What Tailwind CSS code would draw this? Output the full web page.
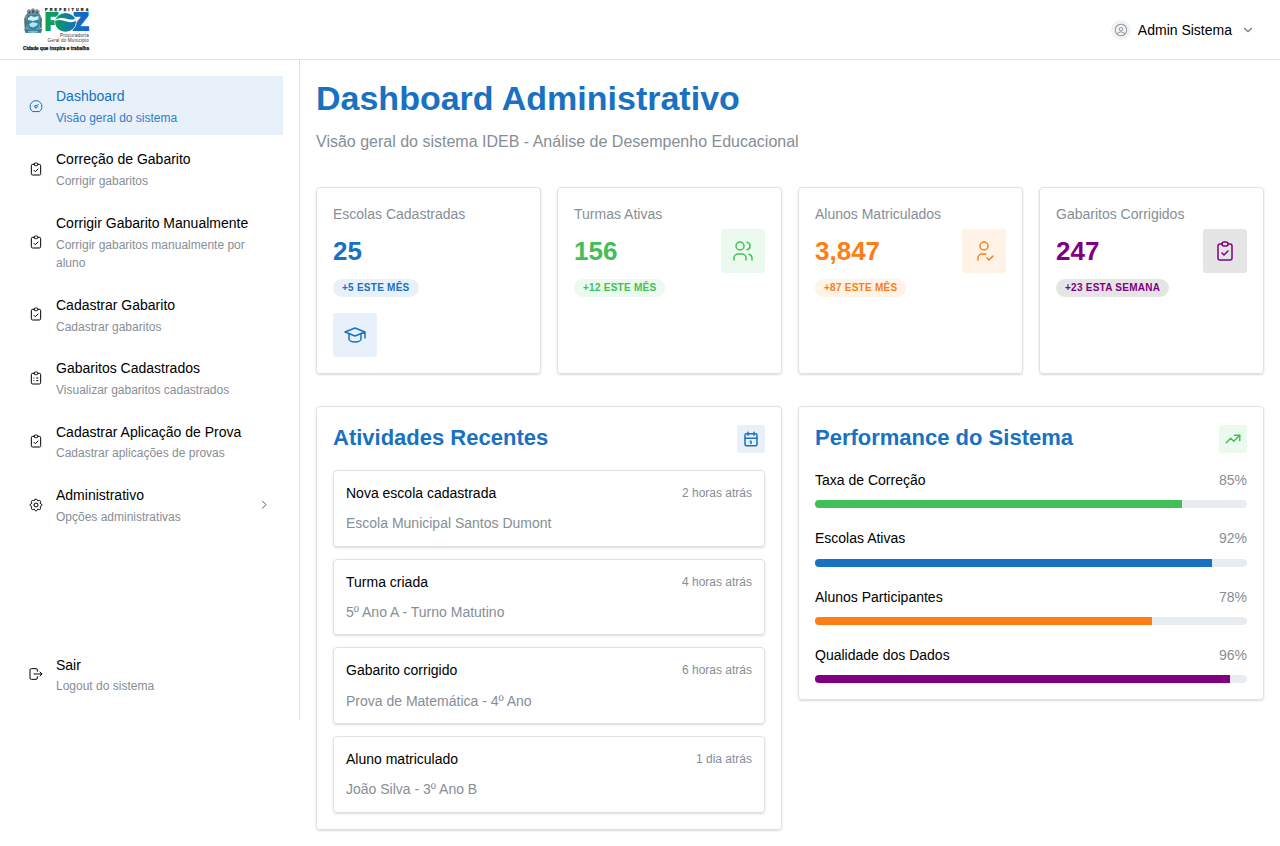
<!DOCTYPE html>
<html lang="pt-BR">
<head>
<meta charset="utf-8">
<title>Dashboard Administrativo</title>
<script src="https://cdn.jsdelivr.net/npm/@tailwindcss/browser@4"></script>
</head>
<body class="min-h-[846px] bg-white font-['Liberation_Sans',Arial,sans-serif] text-base leading-[1.55] text-black">
<svg class="hidden">
  <defs>
    <g id="clip-check"><path d="M9 5h-2a2 2 0 0 0 -2 2v12a2 2 0 0 0 2 2h10a2 2 0 0 0 2 -2v-12a2 2 0 0 0 -2 -2h-2"/><path d="M9 5a2 2 0 0 1 2 -2h2a2 2 0 0 1 2 2a2 2 0 0 1 -2 2h-2a2 2 0 0 1 -2 -2z"/><path d="M9 14l2 2l4 -4"/></g>
    <g id="clip-list"><path d="M9 5h-2a2 2 0 0 0 -2 2v12a2 2 0 0 0 2 2h10a2 2 0 0 0 2 -2v-12a2 2 0 0 0 -2 -2h-2"/><path d="M9 5a2 2 0 0 1 2 -2h2a2 2 0 0 1 2 2a2 2 0 0 1 -2 2h-2a2 2 0 0 1 -2 -2z"/><path d="M9 12l.01 0M13 12l2 0M9 16l.01 0M13 16l2 0"/></g>
  </defs>
</svg>

<header class="flex h-[60px] items-center justify-between border-b border-[#dee2e6] pt-px pl-[22px] pr-[25px]">
  <svg class="h-[46px] w-[70px]" viewBox="22 7 70 46" role="img">
    <defs>
      <linearGradient id="foz" gradientUnits="userSpaceOnUse" x1="45" y1="0" x2="89" y2="0"><stop offset="0" stop-color="#10a351"/><stop offset=".25" stop-color="#0f9a62"/><stop offset=".6" stop-color="#1278a8"/><stop offset="1" stop-color="#1560d8"/></linearGradient>
      <clipPath id="disc"><ellipse cx="65.500" cy="22.300" rx="10.400" ry="9.400"/></clipPath>
    </defs>
    <path d="M27 10.800l1.800-1.800 1.700 1 2.500-2 2.500 2 1.700-1 2.300 1.800v3.200h-12.500z" fill="#8b9196"/>
    <path d="M28.500 11.500h2v2h-2zM32 10.300h2.200v3H32zM36 11.500h2v2h-2z" fill="#46545d"/>
    <path d="M26.500 14c-3 3-3 9-1.500 14l2.500 4h11l2.500-4c1.500-5 1.500-11-1.500-14z" fill="#7f9598"/>
    <path d="M27 14.500h12.500v9q-.5 5-6.300 7.500Q27.500 28.500 27 23.500z" fill="#2b86ae"/>
    <path d="M28 18l3-2.200 3 1.200 4.500-1v3.500l-5.500 1.500-5-1z" fill="#d7edf2"/>
    <path d="M29 24l4-2 5 1.500-1 2-4 2-3-1z" fill="#bddde8"/>
    <path d="M25.200 18l1 5-1 5M41.300 18l-1 5 1 5" stroke="#327b56" stroke-width="1.300" fill="none"/>
    <path d="M24 28.500l4.500 1 5 1.500 5-1.500 4-1-1.500 4.500-7.500-.5-8 .5z" fill="#2e7f9d"/>
    <path d="M28 31.500h10" stroke="#9ac4d0" stroke-width=".8"/>
    <g font-family="Liberation Sans, Arial, sans-serif">
      <text x="45" y="11.400" font-size="3.800" font-weight="700" textLength="43.500" fill="#222" stroke="#222" stroke-width=".25">PREFEITURA</text>
      <g font-size="23" font-weight="700" fill="url(#foz)" stroke="url(#foz)" stroke-width="2.200">
        <text x="45" y="30.200" textLength="13" lengthAdjust="spacingAndGlyphs">F</text>
        <text x="73" y="30.200" textLength="15.500" lengthAdjust="spacingAndGlyphs">Z</text>
      </g>
      <ellipse cx="65.500" cy="22.300" rx="11" ry="10" fill="#fff"/>
      <g clip-path="url(#disc)">
        <rect x="55" y="12" width="22" height="20" fill="url(#foz)"/>
        <path d="M54.500 20c5-3 9-2.300 13-1 3 1 5.500.8 9-.8v2.600c-3 1.700-6.500 1.700-10 .7-4-1.200-7-2.500-12-.5z" fill="#fff"/>
      </g>
      <text x="60" y="36.900" font-size="4.600" textLength="28.800" fill="#333">Procuradoria</text>
      <text x="47.500" y="41.700" font-size="4.600" textLength="41.300" fill="#333">Geral do Município</text>
      <text x="23" y="50.200" font-size="4.600" font-weight="700" textLength="66" fill="#111" stroke="#111" stroke-width=".25">Cidade que inspira e trabalha</text>
    </g>
    <path d="M23 44.600h66" stroke="#ddd" stroke-width=".4"/>
  </svg>
  <div class="flex items-center">
    <span class="mr-[7px] flex size-5 items-center justify-center rounded-full bg-[#f1f3f5] text-[#868e96]">
      <svg class="size-[14px]" viewBox="0 0 15 15" fill="currentColor"><path fill-rule="evenodd" clip-rule="evenodd" d="M0.877014 7.49988C0.877014 3.84219 3.84216 0.877045 7.49985 0.877045C11.1575 0.877045 14.1227 3.84219 14.1227 7.49988C14.1227 11.1575 11.1575 14.1227 7.49985 14.1227C3.84216 14.1227 0.877014 11.1575 0.877014 7.49988ZM7.49985 1.82704C4.36683 1.82704 1.82701 4.36686 1.82701 7.49988C1.82701 8.97196 2.38774 10.3131 3.30727 11.3213C4.19074 9.94119 5.73818 9.02499 7.50023 9.02499C9.26206 9.02499 10.8093 9.94097 11.6929 11.3208C12.6121 10.3127 13.1727 8.97172 13.1727 7.49988C13.1727 4.36686 10.6328 1.82704 7.49985 1.82704ZM10.9818 11.9787C10.2839 10.7795 8.9857 9.97499 7.50023 9.97499C6.01458 9.97499 4.71624 10.7797 4.01845 11.9791C4.97952 12.7272 6.18765 13.1727 7.49985 13.1727C8.81227 13.1727 10.0206 12.727 10.9818 11.9787ZM5.14999 6.50487C5.14999 5.207 6.20212 4.15487 7.49999 4.15487C8.79786 4.15487 9.84999 5.207 9.84999 6.50487C9.84999 7.80274 8.79786 8.85487 7.49999 8.85487C6.20212 8.85487 5.14999 7.80274 5.14999 6.50487ZM7.49999 5.10487C6.72679 5.10487 6.09999 5.73167 6.09999 6.50487C6.09999 7.27807 6.72679 7.90487 7.49999 7.90487C8.27319 7.90487 8.89999 7.27807 8.89999 6.50487C8.89999 5.73167 8.27319 5.10487 7.49999 5.10487Z"/></svg>
    </span>
    <span class="mr-[9px] text-sm leading-[1.45] font-medium">Admin Sistema</span>
    <svg class="size-[14px]" viewBox="0 0 24 24" fill="none" stroke="#777" stroke-width="2" stroke-linecap="round" stroke-linejoin="round"><path d="M6 9l6 6l6 -6"/></svg>
  </div>
</header>

<div class="flex items-start">
  <aside class="flex h-[660px] w-[300px] shrink-0 flex-col justify-between border-r border-[#dee2e6] p-4">
    <nav class="flex flex-col gap-1">
      <a class="flex items-center gap-3 bg-[#e8f0fa] px-3 py-2 text-[#1971c2]">
        <svg class="size-4 shrink-0" viewBox="0 0 24 24" fill="none" stroke="currentColor" stroke-width="1.500" stroke-linecap="round" stroke-linejoin="round"><path d="M12 13m-2 0a2 2 0 1 0 4 0a2 2 0 1 0 -4 0"/><path d="M13.450 11.550l2.050 -2.050"/><path d="M6.400 20a9 9 0 1 1 11.200 0z"/></svg>
        <span class="flex-1"><span class="block text-sm leading-[24.8px]">Dashboard</span><span class="block text-xs leading-[18.6px] opacity-90">Visão geral do sistema</span></span>
      </a>
      <a class="flex items-center gap-3 px-3 py-2">
        <svg class="size-4 shrink-0" viewBox="0 0 24 24" fill="none" stroke="currentColor" stroke-width="1.500" stroke-linecap="round" stroke-linejoin="round"><use href="#clip-check"/></svg>
        <span class="flex-1"><span class="block text-sm leading-[24.8px]">Correção de Gabarito</span><span class="block text-xs leading-[18.6px] text-[#868e96]">Corrigir gabaritos</span></span>
      </a>
      <a class="flex items-center gap-3 px-3 py-2">
        <svg class="size-4 shrink-0" viewBox="0 0 24 24" fill="none" stroke="currentColor" stroke-width="1.500" stroke-linecap="round" stroke-linejoin="round"><use href="#clip-check"/></svg>
        <span class="flex-1"><span class="block text-sm leading-[24.8px]">Corrigir Gabarito Manualmente</span><span class="block text-xs leading-[18.6px] text-[#868e96]">Corrigir gabaritos manualmente por aluno</span></span>
      </a>
      <a class="flex items-center gap-3 px-3 py-2">
        <svg class="size-4 shrink-0" viewBox="0 0 24 24" fill="none" stroke="currentColor" stroke-width="1.500" stroke-linecap="round" stroke-linejoin="round"><use href="#clip-check"/></svg>
        <span class="flex-1"><span class="block text-sm leading-[24.8px]">Cadastrar Gabarito</span><span class="block text-xs leading-[18.6px] text-[#868e96]">Cadastrar gabaritos</span></span>
      </a>
      <a class="flex items-center gap-3 px-3 py-2">
        <svg class="size-4 shrink-0" viewBox="0 0 24 24" fill="none" stroke="currentColor" stroke-width="1.500" stroke-linecap="round" stroke-linejoin="round"><use href="#clip-list"/></svg>
        <span class="flex-1"><span class="block text-sm leading-[24.8px]">Gabaritos Cadastrados</span><span class="block text-xs leading-[18.6px] text-[#868e96]">Visualizar gabaritos cadastrados</span></span>
      </a>
      <a class="flex items-center gap-3 px-3 py-2">
        <svg class="size-4 shrink-0" viewBox="0 0 24 24" fill="none" stroke="currentColor" stroke-width="1.500" stroke-linecap="round" stroke-linejoin="round"><use href="#clip-check"/></svg>
        <span class="flex-1"><span class="block text-sm leading-[24.8px]">Cadastrar Aplicação de Prova</span><span class="block text-xs leading-[18.6px] text-[#868e96]">Cadastrar aplicações de provas</span></span>
      </a>
      <a class="flex items-center gap-3 px-3 py-2">
        <svg class="size-4 shrink-0" viewBox="0 0 24 24" fill="none" stroke="currentColor" stroke-width="1.500" stroke-linecap="round" stroke-linejoin="round"><path d="M10.325 4.317c.426 -1.756 2.924 -1.756 3.350 0a1.724 1.724 0 0 0 2.573 1.066c1.543 -.94 3.310 .826 2.370 2.370a1.724 1.724 0 0 0 1.065 2.572c1.756 .426 1.756 2.924 0 3.350a1.724 1.724 0 0 0 -1.066 2.573c.94 1.543 -.826 3.310 -2.370 2.370a1.724 1.724 0 0 0 -2.572 1.065c-.426 1.756 -2.924 1.756 -3.350 0a1.724 1.724 0 0 0 -2.573 -1.066c-1.543 .94 -3.310 -.826 -2.370 -2.370a1.724 1.724 0 0 0 -1.065 -2.572c-1.756 -.426 -1.756 -2.924 0 -3.350a1.724 1.724 0 0 0 1.066 -2.573c-.94 -1.543 .826 -3.310 2.370 -2.370c1 .608 2.296 .07 2.572 -1.065z"/><path d="M9 12a3 3 0 1 0 6 0a3 3 0 0 0 -6 0"/></svg>
        <span class="flex-1"><span class="block text-sm leading-[24.8px]">Administrativo</span><span class="block text-xs leading-[18.6px] text-[#868e96]">Opções administrativas</span></span>
        <svg class="size-[14px]" viewBox="0 0 24 24" fill="none" stroke="#444" stroke-width="1.500" stroke-linecap="round" stroke-linejoin="round"><path d="M9.500 5.500l6 6l-6 6"/></svg>
      </a>
    </nav>
    <a class="flex items-center gap-3 px-3 py-2">
      <svg class="size-4 shrink-0" viewBox="0 0 24 24" fill="none" stroke="currentColor" stroke-width="1.500" stroke-linecap="round" stroke-linejoin="round"><path d="M14 8v-2a2 2 0 0 0 -2 -2h-7a2 2 0 0 0 -2 2v12a2 2 0 0 0 2 2h7a2 2 0 0 0 2 -2v-2"/><path d="M9 12h12l-3 -3"/><path d="M18 15l3 -3"/></svg>
      <span class="flex-1"><span class="block text-sm leading-[24.8px]">Sair</span><span class="block text-xs leading-[18.6px] text-[#868e96]">Logout do sistema</span></span>
    </a>
  </aside>

  <main class="flex-1 p-4">
    <h1 class="text-[34px] leading-[1.3] font-bold text-[#1971c2]">Dashboard Administrativo</h1>
    <p class="mt-2.5 text-[#868e96]">Visão geral do sistema IDEB - Análise de Desempenho Educacional</p>

    <section class="mt-8 grid grid-cols-4 gap-4">
      <div class="rounded-sm border border-[#dee2e6] p-4 shadow-[0_1px_3px_rgba(0,0,0,0.05),0_1px_2px_rgba(0,0,0,0.1)]">
        <div class="flex flex-col items-start">
          <p class="text-sm leading-[1.45] text-[#868e96]">Escolas Cadastradas</p>
          <p class="mt-2.5 text-[26px] leading-[1.35] font-bold text-[#1971c2]">25</p>
          <span class="mt-2.5 h-[18px] rounded-full bg-[#e8f0fa] px-[9px] text-[10px] leading-[18px] font-bold tracking-[0.25px] text-[#1971c2] uppercase">+5 este mês</span>
        </div>
        <div class="mt-4 flex size-11 items-center justify-center rounded-[3px] bg-[#e8f0fa] text-[#1971c2]">
          <svg class="size-6" viewBox="0 0 24 24" fill="none" stroke="currentColor" stroke-width="1.500" stroke-linecap="round" stroke-linejoin="round"><path d="M22 9l-10 -4l-10 4l10 4l10 -4v6"/><path d="M6 10.600v5.400a6 3 0 0 0 12 0v-5.400"/></svg>
        </div>
      </div>
      <div class="rounded-sm border border-[#dee2e6] p-4 shadow-[0_1px_3px_rgba(0,0,0,0.05),0_1px_2px_rgba(0,0,0,0.1)]">
        <div class="flex items-center justify-between">
          <div class="flex flex-col items-start">
            <p class="text-sm leading-[1.45] text-[#868e96]">Turmas Ativas</p>
            <p class="mt-2.5 text-[26px] leading-[1.35] font-bold text-[#40c057]">156</p>
            <span class="mt-2.5 h-[18px] rounded-full bg-[#ebf9ee] px-[9px] text-[10px] leading-[18px] font-bold tracking-[0.25px] text-[#40c057] uppercase">+12 este mês</span>
          </div>
          <div class="flex size-11 items-center justify-center rounded-[3px] bg-[#ebf9ee] text-[#40c057]">
            <svg class="size-6" viewBox="0 0 24 24" fill="none" stroke="currentColor" stroke-width="1.500" stroke-linecap="round" stroke-linejoin="round"><path d="M9 7m-4 0a4 4 0 1 0 8 0a4 4 0 1 0 -8 0"/><path d="M3 21v-2a4 4 0 0 1 4 -4h4a4 4 0 0 1 4 4v2"/><path d="M16 3.130a4 4 0 0 1 0 7.750"/><path d="M21 21v-2a4 4 0 0 0 -3 -3.850"/></svg>
          </div>
        </div>
      </div>
      <div class="rounded-sm border border-[#dee2e6] p-4 shadow-[0_1px_3px_rgba(0,0,0,0.05),0_1px_2px_rgba(0,0,0,0.1)]">
        <div class="flex items-center justify-between">
          <div class="flex flex-col items-start">
            <p class="text-sm leading-[1.45] text-[#868e96]">Alunos Matriculados</p>
            <p class="mt-2.5 text-[26px] leading-[1.35] font-bold text-[#fd7e14]">3,847</p>
            <span class="mt-2.5 h-[18px] rounded-full bg-[#fff2e7] px-[9px] text-[10px] leading-[18px] font-bold tracking-[0.25px] text-[#fd7e14] uppercase">+87 este mês</span>
          </div>
          <div class="flex size-11 items-center justify-center rounded-[3px] bg-[#fff2e7] text-[#fd7e14]">
            <svg class="size-6" viewBox="0 0 24 24" fill="none" stroke="currentColor" stroke-width="1.500" stroke-linecap="round" stroke-linejoin="round"><path d="M8 7a4 4 0 1 0 8 0a4 4 0 0 0 -8 0"/><path d="M6 21v-2a4 4 0 0 1 4 -4h4"/><path d="M15 19l2 2l4 -4"/></svg>
          </div>
        </div>
      </div>
      <div class="rounded-sm border border-[#dee2e6] p-4 shadow-[0_1px_3px_rgba(0,0,0,0.05),0_1px_2px_rgba(0,0,0,0.1)]">
        <div class="flex items-center justify-between">
          <div class="flex flex-col items-start">
            <p class="text-sm leading-[1.45] text-[#868e96]">Gabaritos Corrigidos</p>
            <p class="mt-2.5 text-[26px] leading-[1.35] font-bold text-[#800080]">247</p>
            <span class="mt-2.5 h-[18px] rounded-full bg-[#e5e5e5] px-[9px] text-[10px] leading-[18px] font-bold tracking-[0.25px] text-[#800080] uppercase">+23 esta semana</span>
          </div>
          <div class="flex size-11 items-center justify-center rounded-[3px] bg-[#e5e5e5] text-[#800080]">
            <svg class="size-6" viewBox="0 0 24 24" fill="none" stroke="currentColor" stroke-width="1.500" stroke-linecap="round" stroke-linejoin="round"><use href="#clip-check"/></svg>
          </div>
        </div>
      </div>
    </section>

    <section class="mt-8 grid grid-cols-2 items-start gap-4">
      <div class="rounded-sm border border-[#dee2e6] p-4 shadow-[0_1px_3px_rgba(0,0,0,0.05),0_1px_2px_rgba(0,0,0,0.1)]">
        <div class="mb-4 flex items-center justify-between">
          <h2 class="text-[22px] leading-[1.4] font-bold text-[#1971c2]">Atividades Recentes</h2>
          <div class="flex size-7 items-center justify-center rounded-[3px] bg-[#e8f0fa] text-[#1971c2]">
            <svg class="size-[18px]" viewBox="0 0 24 24" fill="none" stroke="currentColor" stroke-width="2" stroke-linecap="round" stroke-linejoin="round"><path d="M4 7a2 2 0 0 1 2 -2h12a2 2 0 0 1 2 2v12a2 2 0 0 1 -2 2h-12a2 2 0 0 1 -2 -2z"/><path d="M16 3l0 4M8 3l0 4M4 11l16 0M11 15l1 0M12 15l0 3"/></svg>
          </div>
        </div>
        <div class="flex flex-col gap-3 text-sm leading-[1.45]">
          <div class="rounded-sm border border-[#dee2e6] p-3 shadow-[0_1px_3px_rgba(0,0,0,0.05),0_1px_2px_rgba(0,0,0,0.1)]">
            <div class="mb-2.5 flex items-center justify-between"><p>Nova escola cadastrada</p><p class="text-xs leading-[1.4] text-[#868e96]">2 horas atrás</p></div>
            <p class="text-[#868e96]">Escola Municipal Santos Dumont</p>
          </div>
          <div class="rounded-sm border border-[#dee2e6] p-3 shadow-[0_1px_3px_rgba(0,0,0,0.05),0_1px_2px_rgba(0,0,0,0.1)]">
            <div class="mb-2.5 flex items-center justify-between"><p>Turma criada</p><p class="text-xs leading-[1.4] text-[#868e96]">4 horas atrás</p></div>
            <p class="text-[#868e96]">5º Ano A - Turno Matutino</p>
          </div>
          <div class="rounded-sm border border-[#dee2e6] p-3 shadow-[0_1px_3px_rgba(0,0,0,0.05),0_1px_2px_rgba(0,0,0,0.1)]">
            <div class="mb-2.5 flex items-center justify-between"><p>Gabarito corrigido</p><p class="text-xs leading-[1.4] text-[#868e96]">6 horas atrás</p></div>
            <p class="text-[#868e96]">Prova de Matemática - 4º Ano</p>
          </div>
          <div class="rounded-sm border border-[#dee2e6] p-3 shadow-[0_1px_3px_rgba(0,0,0,0.05),0_1px_2px_rgba(0,0,0,0.1)]">
            <div class="mb-2.5 flex items-center justify-between"><p>Aluno matriculado</p><p class="text-xs leading-[1.4] text-[#868e96]">1 dia atrás</p></div>
            <p class="text-[#868e96]">João Silva - 3º Ano B</p>
          </div>
        </div>
      </div>

      <div class="rounded-sm border border-[#dee2e6] p-4 shadow-[0_1px_3px_rgba(0,0,0,0.05),0_1px_2px_rgba(0,0,0,0.1)]">
        <div class="mb-4 flex items-center justify-between">
          <h2 class="text-[22px] leading-[1.4] font-bold text-[#1971c2]">Performance do Sistema</h2>
          <div class="flex size-7 items-center justify-center rounded-[3px] bg-[#ebf9ee] text-[#40c057]">
            <svg class="size-[18px]" viewBox="0 0 24 24" fill="none" stroke="currentColor" stroke-width="2" stroke-linecap="round" stroke-linejoin="round"><path d="M3 17l6 -6l4 4l8 -8"/><path d="M14 7l7 0l0 7"/></svg>
          </div>
        </div>
        <div class="flex flex-col gap-5 text-sm leading-[1.45]">
          <div>
            <div class="mb-2.5 flex justify-between"><p>Taxa de Correção</p><p class="text-[#868e96]">85%</p></div>
            <div class="h-2 overflow-hidden rounded-full bg-[#e9ecef]"><div class="h-full bg-[#40c057]" style="width:85%"></div></div>
          </div>
          <div>
            <div class="mb-2.5 flex justify-between"><p>Escolas Ativas</p><p class="text-[#868e96]">92%</p></div>
            <div class="h-2 overflow-hidden rounded-full bg-[#e9ecef]"><div class="h-full bg-[#1971c2]" style="width:92%"></div></div>
          </div>
          <div>
            <div class="mb-2.5 flex justify-between"><p>Alunos Participantes</p><p class="text-[#868e96]">78%</p></div>
            <div class="h-2 overflow-hidden rounded-full bg-[#e9ecef]"><div class="h-full bg-[#fd7e14]" style="width:78%"></div></div>
          </div>
          <div>
            <div class="mb-2.5 flex justify-between"><p>Qualidade dos Dados</p><p class="text-[#868e96]">96%</p></div>
            <div class="h-2 overflow-hidden rounded-full bg-[#e9ecef]"><div class="h-full bg-[#800080]" style="width:96%"></div></div>
          </div>
        </div>
      </div>
    </section>
  </main>
</div>
</body>
</html>
